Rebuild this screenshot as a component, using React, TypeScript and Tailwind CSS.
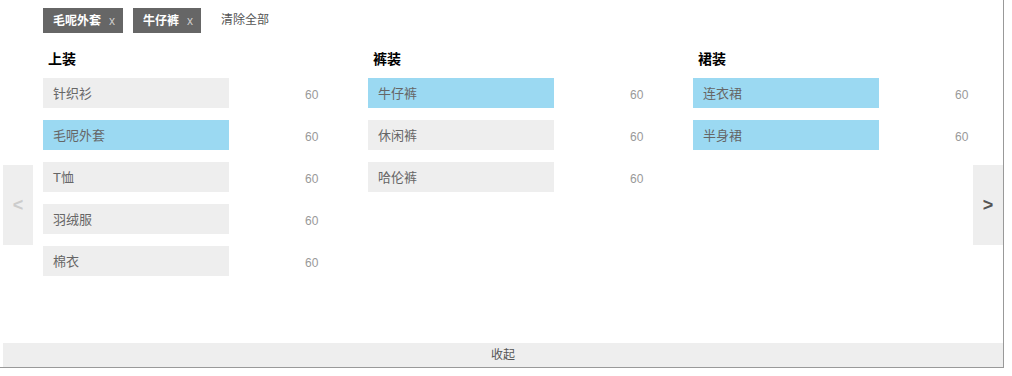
import React from "react";

type Item = { name: string; count: number; active?: boolean };
type Group = { title: string; items: Item[] };

const groups: Group[] = [
  {
    title: "上装",
    items: [
      { name: "针织衫", count: 60 },
      { name: "毛呢外套", count: 60, active: true },
      { name: "T恤", count: 60 },
      { name: "羽绒服", count: 60 },
      { name: "棉衣", count: 60 },
    ],
  },
  {
    title: "裤装",
    items: [
      { name: "牛仔裤", count: 60, active: true },
      { name: "休闲裤", count: 60 },
      { name: "哈伦裤", count: 60 },
    ],
  },
  {
    title: "裙装",
    items: [
      { name: "连衣裙", count: 60, active: true },
      { name: "半身裙", count: 60, active: true },
    ],
  },
];

const tags = ["毛呢外套", "牛仔裤"];

function Tag({ label }: { label: string }) {
  return (
    <div className="flex h-[25px] items-center bg-[#666] pl-[10px] pr-[8px] text-[12px]">
      <span className="font-bold text-white">{label}</span>
      <span className="ml-[8px] text-[#ccc]">x</span>
    </div>
  );
}

function Column({ group, grow }: { group: Group; grow?: boolean }) {
  return (
    <div className={grow ? "min-w-0 flex-1" : "w-[325px] shrink-0"}>
      <div className="h-[30px] pl-[5px] pt-[16px] text-[14px] font-bold leading-[20px] text-black">
        {group.title}
      </div>
      <div className="mt-[15px] flex flex-col gap-[12px]">
        {group.items.map((it) => (
          <div key={it.name} className="flex items-center">
            <div
              className={
                "flex h-[30px] w-[186px] items-center pl-[10px] pt-[2px] text-[13px] text-[#666] " +
                (it.active ? "bg-[#9bd9f2]" : "bg-[#eee]")
              }
            >
              {it.name}
            </div>
            <span className="ml-[76px] pt-[3px] text-[12px] text-[#999]">{it.count}</span>
          </div>
        ))}
      </div>
    </div>
  );
}

export default function App() {
  return (
    <div
      className="flex h-[368px] w-[1004px] flex-col border-r border-b border-[#999] bg-white pl-[3px]"
      style={{ fontFamily: '"Liberation Sans", "Noto Sans CJK SC", sans-serif' }}
    >
      {/* 已选条件 */}
      <div className="flex h-[33px] items-start gap-[10px] pl-[40px] pt-[8px]">
        {tags.map((t) => (
          <Tag key={t} label={t} />
        ))}
        <span className="ml-[10px] text-[12px] leading-[25px] text-[#555]">清除全部</span>
      </div>

      {/* 分类列表 */}
      <div className="flex flex-1">
        <button className="mt-[132px] flex h-[80px] w-[30px] shrink-0 items-center justify-center bg-[#eee] text-[18px] font-bold text-[#ccc]">
          &lt;
        </button>
        <div className="flex min-w-0 flex-1 overflow-hidden pl-[10px]">
          {groups.map((g, i) => (
            <Column key={g.title} group={g} grow={i === groups.length - 1} />
          ))}
        </div>
        <button className="mt-[132px] flex h-[80px] w-[30px] shrink-0 items-center justify-center bg-[#eee] text-[18px] font-bold text-[#555]">
          &gt;
        </button>
      </div>

      <div className="h-[24px] bg-[#eee] text-center text-[12px] leading-[24px] text-[#555]">收起</div>
    </div>
  );
}
